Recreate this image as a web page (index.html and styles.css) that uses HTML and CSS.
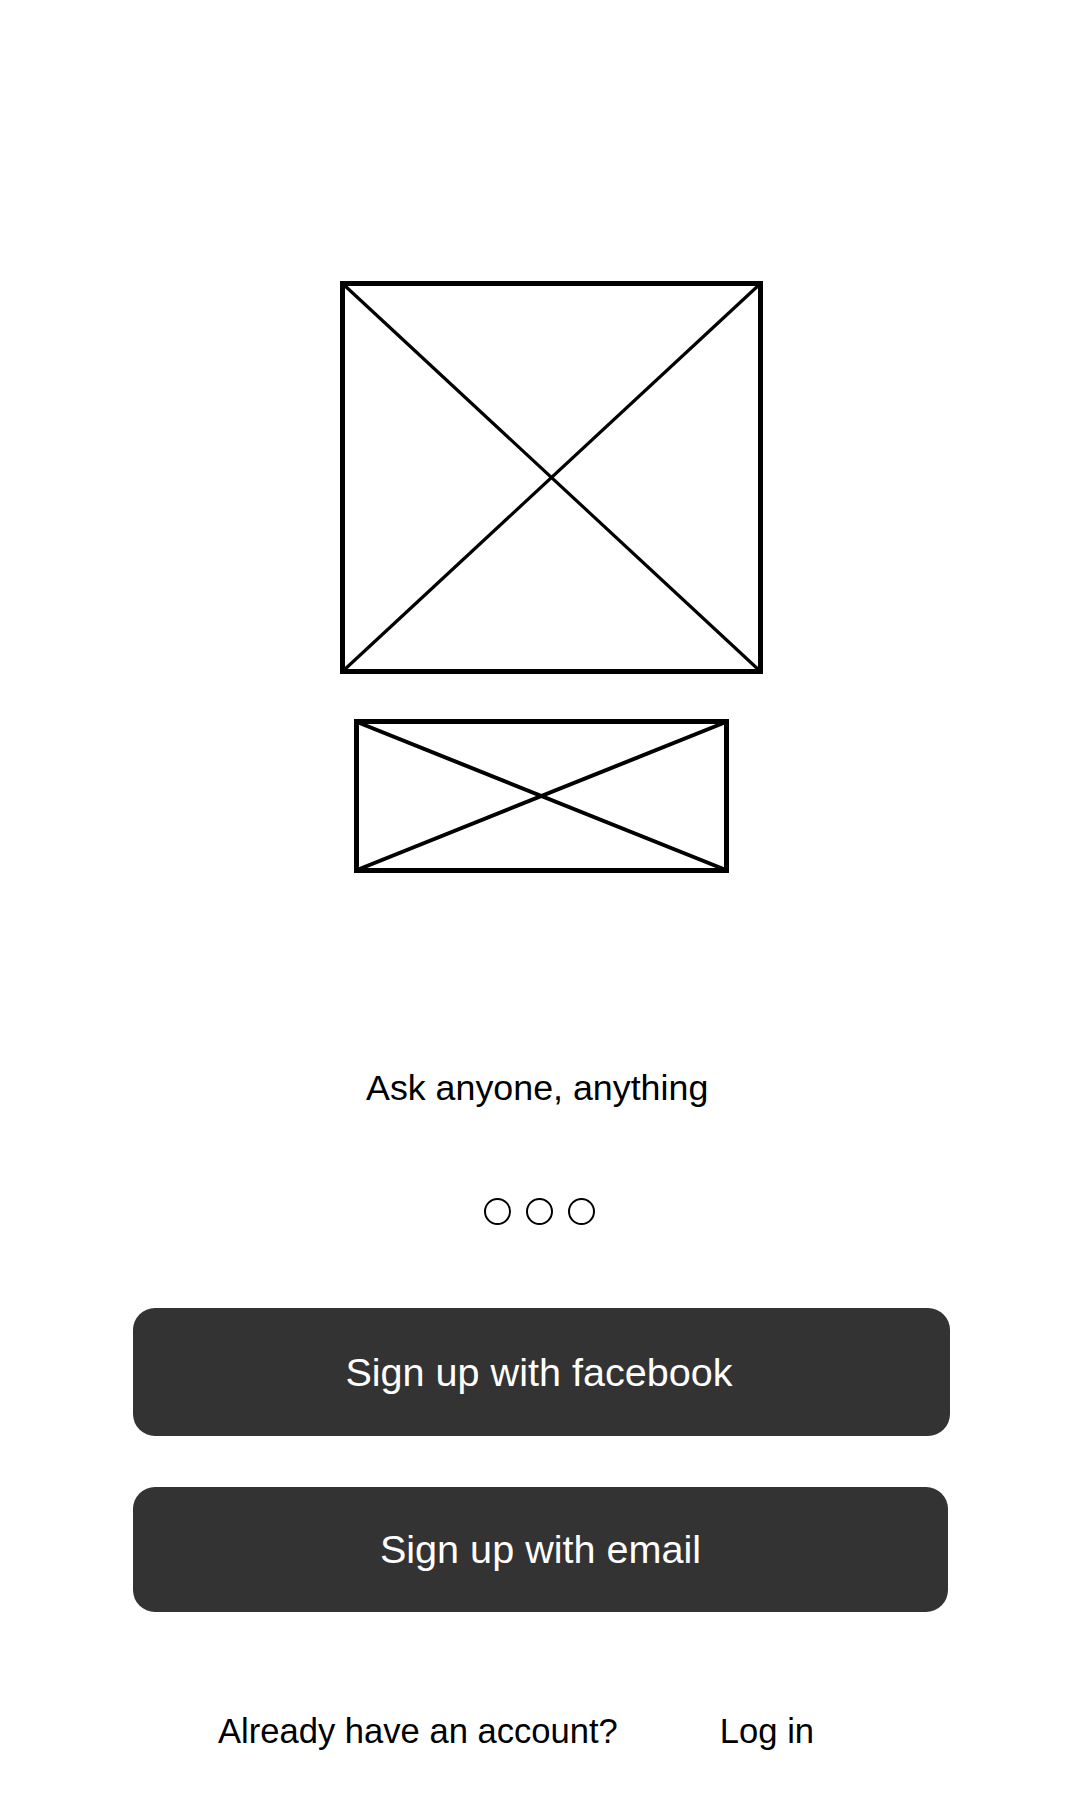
FILE: index.html
```html
<!DOCTYPE html>
<html lang="en">
<head>
<meta charset="utf-8">
<title>Ask anyone, anything</title>
<link rel="stylesheet" href="styles.css">
</head>
<body>
<main class="screen">
  <svg class="ph ph-logo" width="423" height="393" viewBox="0 0 423 393" aria-hidden="true">
    <rect x="2.5" y="2.5" width="418" height="388" fill="none" stroke="#000" stroke-width="5"/>
    <line x1="3" y1="3" x2="420" y2="390" stroke="#000" stroke-width="3.2"/>
    <line x1="420" y1="3" x2="3" y2="390" stroke="#000" stroke-width="3.2"/>
  </svg>
  <svg class="ph ph-name" width="375" height="154" viewBox="0 0 375 154" aria-hidden="true">
    <rect x="2.5" y="2.5" width="370" height="149" fill="none" stroke="#000" stroke-width="5"/>
    <line x1="3" y1="3" x2="372" y2="151" stroke="#000" stroke-width="4"/>
    <line x1="372" y1="3" x2="3" y2="151" stroke="#000" stroke-width="4"/>
  </svg>
  <p class="tagline">Ask anyone, anything</p>
  <div class="dots">
    <span class="dot"></span>
    <span class="dot"></span>
    <span class="dot"></span>
  </div>
  <button class="btn btn-fb">Sign up with facebook</button>
  <button class="btn btn-email">Sign up with email</button>
  <div class="login-row">
    <span class="login-q">Already have an account?</span>
    <a class="login-link" href="#">Log in</a>
  </div>
</main>
</body>
</html>
```

FILE: styles.css
```css
html, body {
  margin: 0;
  padding: 0;
  background: #ffffff;
}

body {
  width: 1080px;
  height: 1800px;
  font-family: "Liberation Sans", Arial, sans-serif;
  color: #000;
}

.screen {
  display: flex;
  flex-direction: column;
  align-items: flex-start;
  padding-top: 281px;
}

.ph {
  display: block;
}

.ph-logo {
  margin-left: 340px;
}

.ph-name {
  margin-left: 354px;
  margin-top: 45px;
}

.tagline {
  margin: 195px 0 0 366px;
  font-size: 35.8px;
  line-height: 40px;
}

.dots {
  display: flex;
  gap: 15px;
  margin: 90px 0 0 484px;
}

.dot {
  width: 23px;
  height: 23px;
  border: 2.5px solid #000;
  border-radius: 50%;
}

.btn {
  display: block;
  border: 0;
  margin-left: 133px;
  background: #333333;
  color: #ffffff;
  border-radius: 22px;
  font-family: "Liberation Sans", Arial, sans-serif;
  font-size: 39.6px;
  padding: 0;
  cursor: pointer;
}

.btn-fb {
  width: 817px;
  height: 128px;
  margin-top: 83px;
  padding-right: 5px;
}

.btn-email {
  width: 815px;
  height: 125px;
  margin-top: 51px;
}

.login-row {
  display: flex;
  gap: 102px;
  margin: 99px 0 0 218px;
  font-size: 34.6px;
  line-height: 40px;
}

.login-link {
  color: #000;
  text-decoration: none;
}
```
